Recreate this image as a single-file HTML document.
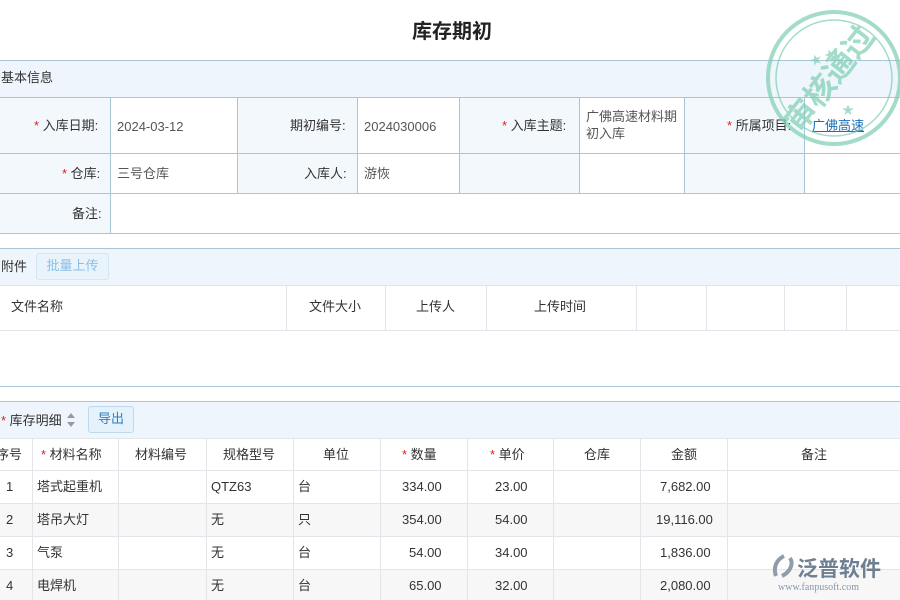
<!DOCTYPE html>
<html><head><meta charset="utf-8"><style>
*{margin:0;padding:0;box-sizing:border-box}
body{width:900px;height:600px;overflow:hidden;background:#fff;font-family:"Liberation Sans","Noto Sans CJK SC",sans-serif;font-size:13px;color:#333;position:relative}
.a{position:absolute}
.t{position:absolute;font-size:13px;white-space:nowrap}
.c{margin-top:-3px}
.hl{position:absolute;left:0;width:900px;height:1px;background:#a9c6d6}
.vl{position:absolute;width:1px;background:#a9c6d6}
.gl{position:absolute;width:1px;background:#e2e6ea}
.gh{position:absolute;left:0;width:900px;height:1px;background:#e2e6ea}
.r{color:#e02020}
</style></head><body>
<div class="t" style="left:0;width:904px;text-align:center;top:15px;font-size:20px;font-weight:bold;color:#222">库存期初</div>

<div class="a" style="left:0;top:60px;width:900px;height:37px;background:#eef5fc"></div>
<div class="a" style="left:0;top:97px;width:110px;height:136px;background:#f3f8fd"></div>
<div class="a" style="left:237px;top:97px;width:120px;height:96px;background:#f3f8fd"></div>
<div class="a" style="left:459px;top:97px;width:120px;height:96px;background:#f3f8fd"></div>
<div class="a" style="left:684px;top:97px;width:120px;height:96px;background:#f3f8fd"></div>
<div class="hl" style="top:60px"></div><div class="hl" style="top:97px"></div><div class="hl" style="top:153px"></div><div class="hl" style="top:193px"></div><div class="hl" style="top:233px"></div>
<div class="vl" style="left:110px;top:97px;height:136px"></div>
<div class="vl" style="left:237px;top:97px;height:96px"></div>
<div class="vl" style="left:357px;top:97px;height:96px"></div>
<div class="vl" style="left:459px;top:97px;height:96px"></div>
<div class="vl" style="left:579px;top:97px;height:96px"></div>
<div class="vl" style="left:684px;top:97px;height:96px"></div>
<div class="vl" style="left:804px;top:97px;height:96px"></div>
<div class="t c" style="left:1px;top:70px">基本信息</div>
<div class="t c" style="left:34px;top:118px"><span class="r">*</span> 入库日期:</div>
<div class="t" style="left:117px;top:119px;color:#555">2024-03-12</div>
<div class="t c" style="left:290px;top:118px">期初编号:</div>
<div class="t" style="left:364px;top:119px;color:#555">2024030006</div>
<div class="t c" style="left:502px;top:118px"><span class="r">*</span> 入库主题:</div>
<div class="t" style="left:586px;top:108px;color:#555;line-height:17px">广佛高速材料期<br>初入库</div>
<div class="t c" style="left:727px;top:118px"><span class="r">*</span> 所属项目:</div>
<div class="t c" style="left:812px;top:118px;color:#1b6fb5;text-decoration:underline">广佛高速</div>
<div class="t c" style="left:62px;top:166px"><span class="r">*</span> 仓库:</div>
<div class="t c" style="left:117px;top:166px;color:#555">三号仓库</div>
<div class="t c" style="left:304px;top:166px">入库人:</div>
<div class="t c" style="left:364px;top:166px;color:#555">游恢</div>
<div class="t c" style="left:72px;top:206px">备注:</div>

<div class="a" style="left:0;top:248px;width:900px;height:37px;background:#eef5fc"></div>
<div class="hl" style="top:248px"></div>
<div class="gh" style="top:285px"></div><div class="gh" style="top:330px"></div>
<div class="hl" style="top:386px"></div>
<div class="t c" style="left:1px;top:259px">附件</div>
<div class="a" style="left:36px;top:253px;width:73px;height:27px;border:1px solid #d3e6f4;background:#e8f3fc;border-radius:3px;color:#8bbfe6;text-align:center;line-height:23px">批量上传</div>
<div class="gl" style="left:286px;top:285px;height:45px"></div><div class="gl" style="left:385px;top:285px;height:45px"></div><div class="gl" style="left:486px;top:285px;height:45px"></div><div class="gl" style="left:636px;top:285px;height:45px"></div><div class="gl" style="left:706px;top:285px;height:45px"></div><div class="gl" style="left:784px;top:285px;height:45px"></div><div class="gl" style="left:846px;top:285px;height:45px"></div>
<div class="t c" style="left:11px;top:299px">文件名称</div>
<div class="t c" style="left:309px;top:299px">文件大小</div>
<div class="t c" style="left:416px;top:299px">上传人</div>
<div class="t c" style="left:534px;top:299px">上传时间</div>

<div class="a" style="left:0;top:401px;width:900px;height:37px;background:#eef5fc"></div>
<div class="hl" style="top:401px"></div>
<div class="t c" style="left:1px;top:413px"><span class="r">*</span> 库存明细</div>
<svg class="a" style="left:66px;top:411px" width="10" height="18"><path d="M1 7L5 2L9 7Z" fill="#999"/><path d="M1 11L5 16L9 11Z" fill="#999"/></svg>
<div class="a" style="left:88px;top:406px;width:46px;height:27px;border:1px solid #bcd9ee;background:#e5f1fb;border-radius:3px;color:#2c7fc0;text-align:center;line-height:23px">导出</div>
<div class="a" style="left:0;top:503px;width:900px;height:33px;background:#f7f7f7"></div>
<div class="a" style="left:0;top:569px;width:900px;height:31px;background:#f7f7f7"></div>
<div class="gh" style="top:438px"></div><div class="gh" style="top:470px"></div><div class="gh" style="top:503px"></div><div class="gh" style="top:536px"></div><div class="gh" style="top:569px"></div>
<div class="gl" style="left:32px;top:438px;height:162px"></div><div class="gl" style="left:118px;top:438px;height:162px"></div><div class="gl" style="left:206px;top:438px;height:162px"></div><div class="gl" style="left:293px;top:438px;height:162px"></div><div class="gl" style="left:380px;top:438px;height:162px"></div><div class="gl" style="left:467px;top:438px;height:162px"></div><div class="gl" style="left:553px;top:438px;height:162px"></div><div class="gl" style="left:640px;top:438px;height:162px"></div><div class="gl" style="left:727px;top:438px;height:162px"></div>
<div class="t c" style="left:-4px;top:447px">序号</div>
<div class="t c" style="left:41px;top:447px"><span class="r">*</span> 材料名称</div>
<div class="t c" style="left:135px;top:447px">材料编号</div>
<div class="t c" style="left:223px;top:447px">规格型号</div>
<div class="t c" style="left:323px;top:447px">单位</div>
<div class="t c" style="left:402px;top:447px"><span class="r">*</span> 数量</div>
<div class="t c" style="left:490px;top:447px"><span class="r">*</span> 单价</div>
<div class="t c" style="left:584px;top:447px">仓库</div>
<div class="t c" style="left:671px;top:447px">金额</div>
<div class="t c" style="left:801px;top:447px">备注</div>
<div class="t" style="left:6px;top:479px">1</div><div class="t c" style="left:37px;top:479px">塔式起重机</div><div class="t" style="left:211px;top:479px">QTZ63</div><div class="t c" style="left:298px;top:479px">台</div><div class="t" style="left:402px;top:479px">334.00</div><div class="t" style="left:495px;top:479px">23.00</div><div class="t" style="left:660px;top:479px">7,682.00</div>
<div class="t" style="left:6px;top:512px">2</div><div class="t c" style="left:37px;top:512px">塔吊大灯</div><div class="t c" style="left:211px;top:512px">无</div><div class="t c" style="left:298px;top:512px">只</div><div class="t" style="left:402px;top:512px">354.00</div><div class="t" style="left:495px;top:512px">54.00</div><div class="t" style="left:656px;top:512px">19,116.00</div>
<div class="t" style="left:6px;top:545px">3</div><div class="t c" style="left:37px;top:545px">气泵</div><div class="t c" style="left:211px;top:545px">无</div><div class="t c" style="left:298px;top:545px">台</div><div class="t" style="left:409px;top:545px">54.00</div><div class="t" style="left:495px;top:545px">34.00</div><div class="t" style="left:660px;top:545px">1,836.00</div>
<div class="t" style="left:6px;top:578px">4</div><div class="t c" style="left:37px;top:578px">电焊机</div><div class="t c" style="left:211px;top:578px">无</div><div class="t c" style="left:298px;top:578px">台</div><div class="t" style="left:409px;top:578px">65.00</div><div class="t" style="left:495px;top:578px">32.00</div><div class="t" style="left:660px;top:578px">2,080.00</div>

<svg class="a" style="left:762px;top:4px" width="140" height="150" opacity="0.7">
<circle cx="72" cy="74" r="66" fill="none" stroke="#7dceb2" stroke-width="4"/>
<circle cx="72" cy="74" r="58" fill="none" stroke="#7dceb2" stroke-width="1.5"/>
<text x="0" y="0" transform="translate(38,130) rotate(-52)" font-family="Noto Sans CJK SC" font-size="31" font-weight="bold" fill="#7dceb2">审核通过</text>
<text x="48" y="58" font-size="12" fill="#7dceb2" transform="rotate(-20 60 55)">★ ★</text>
<text x="80" y="110" font-size="12" fill="#7dceb2">★</text>
</svg>
<svg class="a" style="left:770px;top:554px" width="28" height="26"><path d="M14 2C6 6 3 14 6 22M12 22C20 18 24 10 20 4" fill="none" stroke="#8f9dab" stroke-width="4"/></svg>
<div class="t" style="left:797px;top:553px;font-size:21px;color:#6d7f91;font-weight:bold">泛普软件</div>
<div class="t" style="left:778px;top:582px;font-size:10px;color:#8899aa;font-family:'Liberation Serif',serif">www.fanpusoft.com</div>
</body></html>
